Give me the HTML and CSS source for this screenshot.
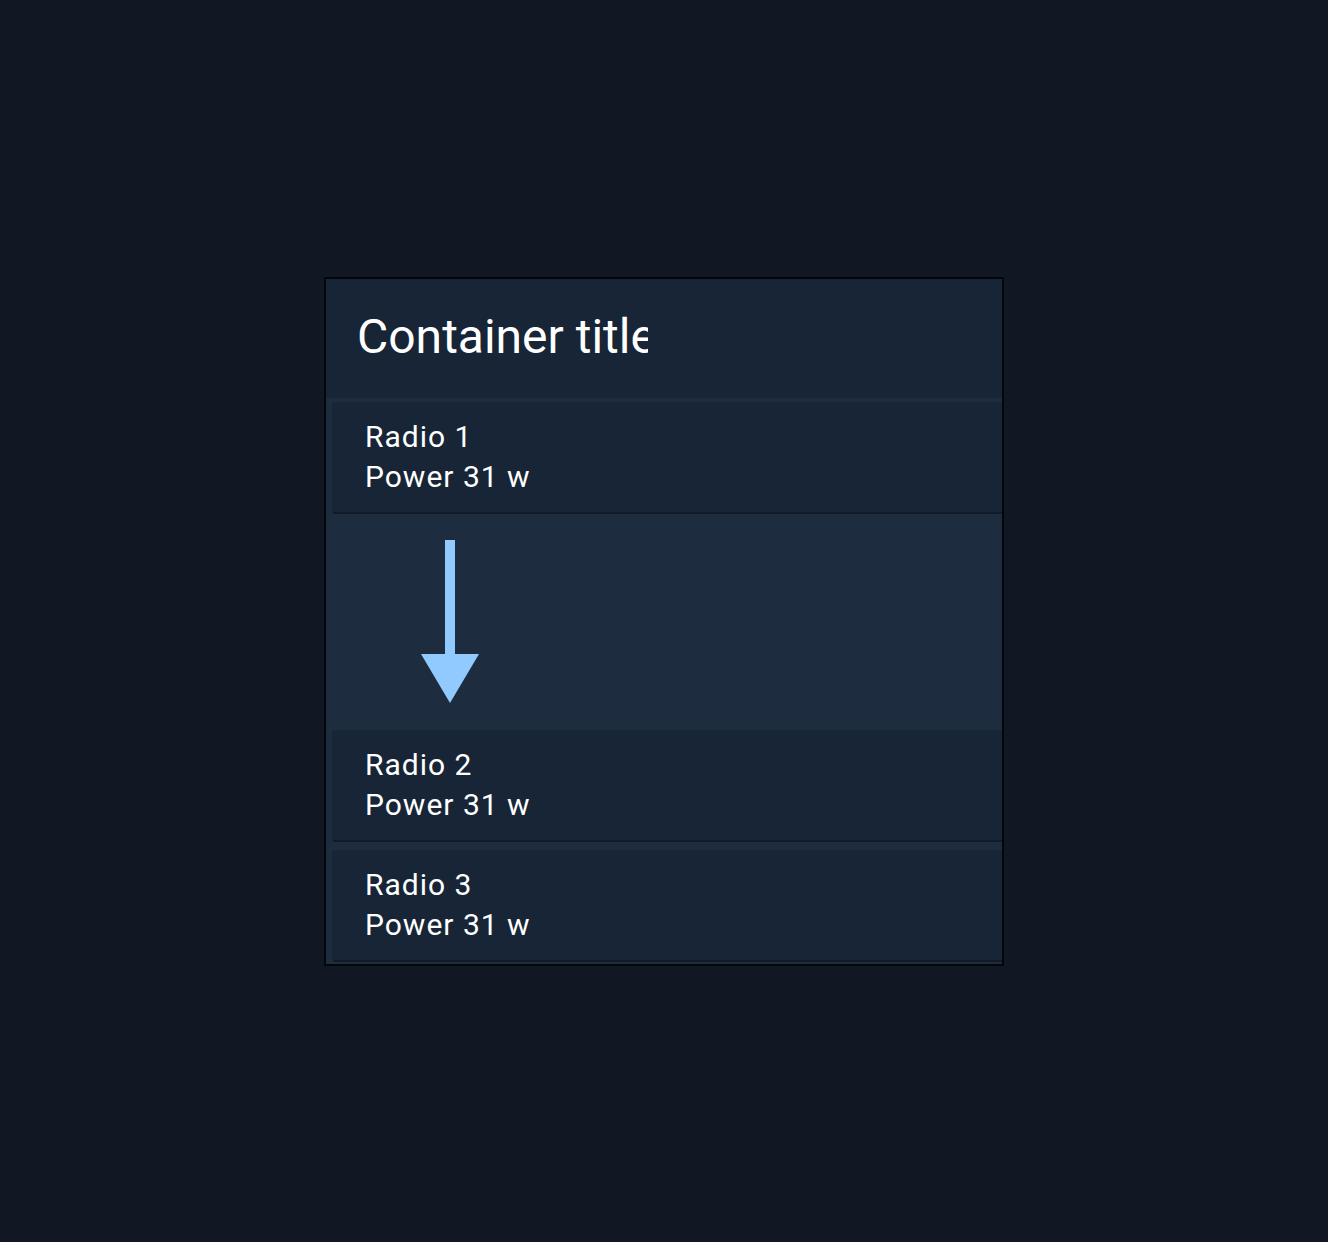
FILE: index.html
```html
<!DOCTYPE html>
<html lang="en">
<head>
<meta charset="utf-8">
<title>Container</title>
<link rel="stylesheet" href="styles.css">
</head>
<body>
<div class="stage">
  <section class="container">
    <header class="container-header">
      <h1 class="container-title">Container title</h1>
    </header>
    <div class="list">
      <div class="card">
        <div class="card-line">Radio 1</div>
        <div class="card-line">Power 31 w</div>
      </div>
      <div class="drop-zone">
        <svg class="drop-arrow" width="58" height="164" viewBox="0 0 58 164" aria-hidden="true">
          <rect x="24" y="0" width="10" height="116" fill="#90caff"/>
          <polygon points="0,114 58,114 29,163" fill="#90caff"/>
        </svg>
      </div>
      <div class="card">
        <div class="card-line">Radio 2</div>
        <div class="card-line">Power 31 w</div>
      </div>
      <div class="card">
        <div class="card-line">Radio 3</div>
        <div class="card-line">Power 31 w</div>
      </div>
    </div>
  </section>
</div>
</body>
</html>
```

FILE: styles.css
```css
html, body {
  margin: 0;
  padding: 0;
  background: #111823;
}

body {
  font-family: Roboto, "Liberation Sans", Arial, sans-serif;
  color: #ffffff;
}

.stage {
  width: 1328px;
  height: 1242px;
  display: flex;
  justify-content: flex-start;
  align-items: flex-start;
  padding: 277px 0 0 324px;
  box-sizing: border-box;
}

.container {
  width: 680px;
  box-sizing: border-box;
  border: 2px solid #03060a;
  background: #1d2c3f;
}

.container-header {
  height: 119px;
  background: #172536;
  padding-left: 31px;
  box-sizing: border-box;
  display: flex;
  align-items: flex-start;
}

.container-title {
  margin: 0;
  padding-top: 28px;
  width: 291px;
  overflow: hidden;
  white-space: nowrap;
  font-weight: 400;
  font-size: 48px;
  line-height: 60px;
}

.list {
  padding: 4px 0 2px 6px;
  display: flex;
  flex-direction: column;
}

.card {
  height: 112px;
  box-sizing: border-box;
  padding: 15px 0 15px 33px;
  background: #172536;
  border-bottom: 2px solid #111a26;
  border-radius: 4px 0 0 4px;
  font-size: 30px;
  line-height: 40px;
  letter-spacing: 1px;
  margin-bottom: 8px;
}

.card:last-child {
  margin-bottom: 0;
}

.drop-zone {
  height: 216px;
  margin-top: -8px;
  padding: 26px 0 0 89px;
  box-sizing: border-box;
}

.drop-arrow {
  display: block;
}
```
